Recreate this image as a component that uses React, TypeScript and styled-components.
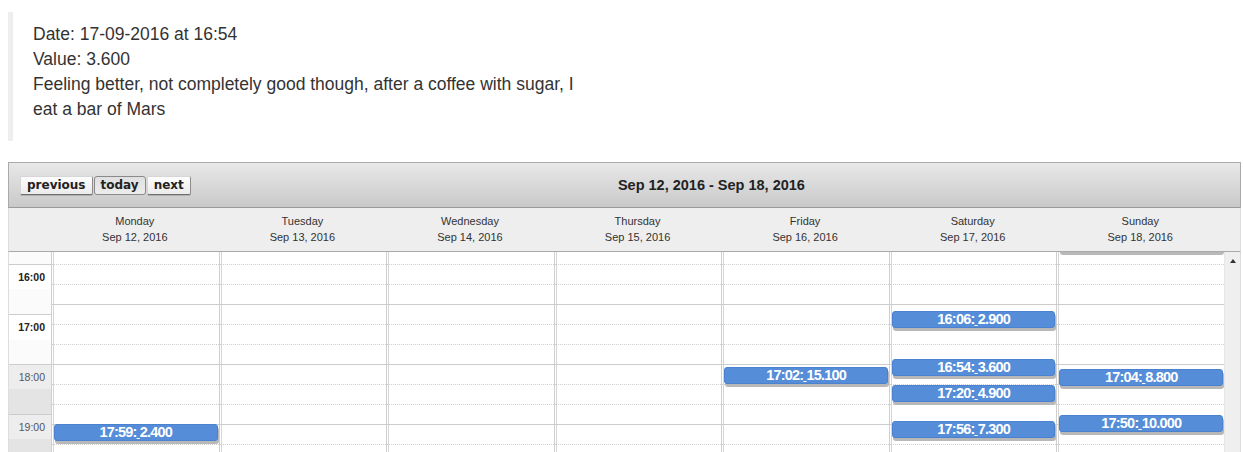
import React from "react";
import styled, { createGlobalStyle } from "styled-components";

const GlobalStyle = createGlobalStyle`
  html, body {
    margin: 0;
    padding: 0;
    overflow: hidden;
    background: #fff;
  }
  body {
    font-family: "Liberation Sans", Arial, sans-serif;
  }
`;

const Page = styled.div`
  padding: 12px 0 0 8px;
`;

const Quote = styled.blockquote`
  margin: 0 0 21px 0;
  width: 555px;
  padding: 10px 20px 19px 20px;
  border-left: 5px solid #eee;
  font-size: 17.5px;
  line-height: 25px;
  color: #333;
`;

const QuoteLine = styled.p`
  margin: 0;
`;

const Calendar = styled.div`
  width: 1233px;
  font-family: "Liberation Sans", Arial, sans-serif;
`;

const Toolbar = styled.div`
  display: flex;
  align-items: center;
  height: 46px;
  box-sizing: border-box;
  border: 1px solid #aaa;
  border-bottom-color: #9a9a9a;
  background: linear-gradient(#e8e8e8, #c9c9c9);
  padding: 0 8px 0 11px;
`;

const ButtonGroup = styled.div`
  display: flex;
  gap: 1px;
`;

const NavButton = styled.button<{ $active?: boolean }>`
  height: 19px;
  margin: 0;
  padding: 0 ${(p) => (p.$active ? "6px" : "6px")};
  box-sizing: border-box;
  font: bold 12px "DejaVu Sans", Verdana, sans-serif;
  line-height: 16px;
  color: #222;
  cursor: pointer;
  border: 1px solid ${(p) => (p.$active ? "#8a8a8a" : "#d6d6d6")};
  border-right-color: ${(p) => (p.$active ? "#8a8a8a" : "#8c8c8c")};
  border-bottom-color: ${(p) => (p.$active ? "#8a8a8a" : "#6f6f6f")};
  border-radius: ${(p) => (p.$active ? "3px" : "2px")};
  box-shadow: ${(p) => (p.$active ? "none" : "0 1px 0 #b0b0b0")};
  background: ${(p) =>
    p.$active ? "linear-gradient(#e0e0e0, #ececec)" : "linear-gradient(#fdfdfd, #ebebeb)"};
`;

const Title = styled.h2`
  flex: 1;
  margin: 0;
  text-align: center;
  font: bold 14.5px "Liberation Sans", Arial, sans-serif;
  color: #222;
`;

const DayHeaderRow = styled.div`
  display: flex;
  height: 44px;
  box-sizing: border-box;
  background: #eee;
  border-left: 1px solid #ddd;
  border-right: 1px solid #ddd;
  border-bottom: 1px solid #aaa;
`;

const AxisSpacer = styled.div`
  width: 42px;
  flex: none;
`;

const ScrollSpacer = styled.div`
  width: 16px;
  flex: none;
`;

const DayHeader = styled.div`
  flex: 1;
  min-width: 0;
  padding-top: 5px;
  text-align: center;
  font-size: 11px;
  line-height: 16px;
  color: #333;
`;

const Body = styled.div`
  display: flex;
  height: 200px;
  overflow: hidden;
  border-left: 1px solid #ddd;
  border-right: 1px solid #ddd;
`;

const Axis = styled.div`
  width: 42px;
  flex: none;
  overflow: hidden;
`;

const AxisStack = styled.div`
  margin-top: -37px;
`;

const AxisRow = styled.div<{ $shaded: boolean; $bold: boolean }>`
  height: 50px;
  box-sizing: border-box;
  border-bottom: 1px solid #ccc;
  padding: 5px 6px 0 0;
  text-align: right;
  font-size: 10.5px;
  line-height: 14px;
  font-weight: ${(p) => (p.$bold ? "bold" : "normal")};
  color: ${(p) => (p.$bold ? "#222" : "#545460")};
  background: ${(p) =>
    p.$shaded
      ? "linear-gradient(#ededed 50%, #e4e4e4 50%)"
      : "linear-gradient(#fff 50%, #fbfbfb 50%)"};
`;

const DayColumn = styled.div`
  flex: 1;
  min-width: 0;
  position: relative;
  overflow: hidden;
  border-left: 1px solid #cfcfcf;
  box-shadow: inset 1px 0 0 #fff, inset 2px 0 0 #d6d6d6;
`;

const SlotStack = styled.div`
  margin-top: -8px;
`;

const Slot = styled.div<{ $solid: boolean }>`
  height: 20px;
  box-sizing: border-box;
  border-top: 1px ${(p) => (p.$solid ? "solid #ccc" : "dotted #cfcfcf")};
`;

const EventBox = styled.div`
  position: absolute;
  left: 2px;
  right: 1px;
  height: 17px;
  box-sizing: border-box;
  background: #558dd9;
  border: 1px solid #4b82cf;
  border-radius: 3px;
  box-shadow: 1px 3px 0 #b8b8b8;
  color: #fff;
  font: bold 14.5px "Liberation Sans", Arial, sans-serif;
  letter-spacing: -0.8px;
  line-height: 15px;
  text-align: center;
  white-space: nowrap;
  overflow: hidden;
`;

const Gap = styled.span`
  text-decoration: underline;
`;

const ScrollTrack = styled.div`
  width: 16px;
  flex: none;
  box-sizing: border-box;
  background: #efefef;
  border-left: 1px solid #e6e6e6;
  display: flex;
  justify-content: center;
  padding-top: 7px;
`;

const ScrollArrow = styled.div`
  width: 0;
  height: 0;
  border-left: 3px solid transparent;
  border-right: 3px solid transparent;
  border-bottom: 4px solid #333;
`;

type Ev = { top: number; time?: string; value?: string };

const days: { name: string; date: string; events: Ev[] }[] = [
  { name: "Monday", date: "Sep 12, 2016", events: [{ top: 172, time: "17:59:", value: "2.400" }] },
  { name: "Tuesday", date: "Sep 13, 2016", events: [] },
  { name: "Wednesday", date: "Sep 14, 2016", events: [] },
  { name: "Thursday", date: "Sep 15, 2016", events: [] },
  { name: "Friday", date: "Sep 16, 2016", events: [{ top: 115, time: "17:02:", value: "15.100" }] },
  {
    name: "Saturday",
    date: "Sep 17, 2016",
    events: [
      { top: 59, time: "16:06:", value: "2.900" },
      { top: 107, time: "16:54:", value: "3.600" },
      { top: 133, time: "17:20:", value: "4.900" },
      { top: 169, time: "17:56:", value: "7.300" },
    ],
  },
  {
    name: "Sunday",
    date: "Sep 18, 2016",
    events: [
      { top: -17 },
      { top: 117, time: "17:04:", value: "8.800" },
      { top: 163, time: "17:50:", value: "10.000" },
    ],
  },
];

const hours = [
  { label: "", shaded: false, bold: true },
  { label: "16:00", shaded: false, bold: true },
  { label: "17:00", shaded: false, bold: true },
  { label: "18:00", shaded: true, bold: false },
  { label: "19:00", shaded: true, bold: false },
];

export default function App() {
  return (
    <Page>
      <GlobalStyle />
      <Quote>
        <QuoteLine>Date: 17-09-2016 at 16:54</QuoteLine>
        <QuoteLine>Value: 3.600</QuoteLine>
        <QuoteLine>
          Feeling better, not completely good though, after a coffee with sugar, I eat a bar of Mars
        </QuoteLine>
      </Quote>
      <Calendar>
        <Toolbar>
          <ButtonGroup>
            <NavButton>previous</NavButton>
            <NavButton $active>today</NavButton>
            <NavButton>next</NavButton>
          </ButtonGroup>
          <Title>Sep 12, 2016 - Sep 18, 2016</Title>
        </Toolbar>
        <DayHeaderRow>
          <AxisSpacer />
          {days.map((d) => (
            <DayHeader key={d.name}>
              <div>{d.name}</div>
              <div>{d.date}</div>
            </DayHeader>
          ))}
          <ScrollSpacer />
        </DayHeaderRow>
        <Body>
          <Axis>
            <AxisStack>
              {hours.map((h, i) => (
                <AxisRow key={i} $shaded={h.shaded} $bold={h.bold}>
                  {h.label}
                </AxisRow>
              ))}
            </AxisStack>
          </Axis>
          {days.map((d) => (
            <DayColumn key={d.name}>
              <SlotStack>
                {Array.from({ length: 11 }, (_, i) => (
                  <Slot key={i} $solid={i % 3 === 0} />
                ))}
              </SlotStack>
              {d.events.map((e, i) => (
                <EventBox key={i} style={{ top: e.top }}>
                  {e.time && (
                    <>
                      {e.time}
                      <Gap> </Gap>
                      {e.value}
                    </>
                  )}
                </EventBox>
              ))}
            </DayColumn>
          ))}
          <ScrollTrack>
            <ScrollArrow />
          </ScrollTrack>
        </Body>
      </Calendar>
    </Page>
  );
}
